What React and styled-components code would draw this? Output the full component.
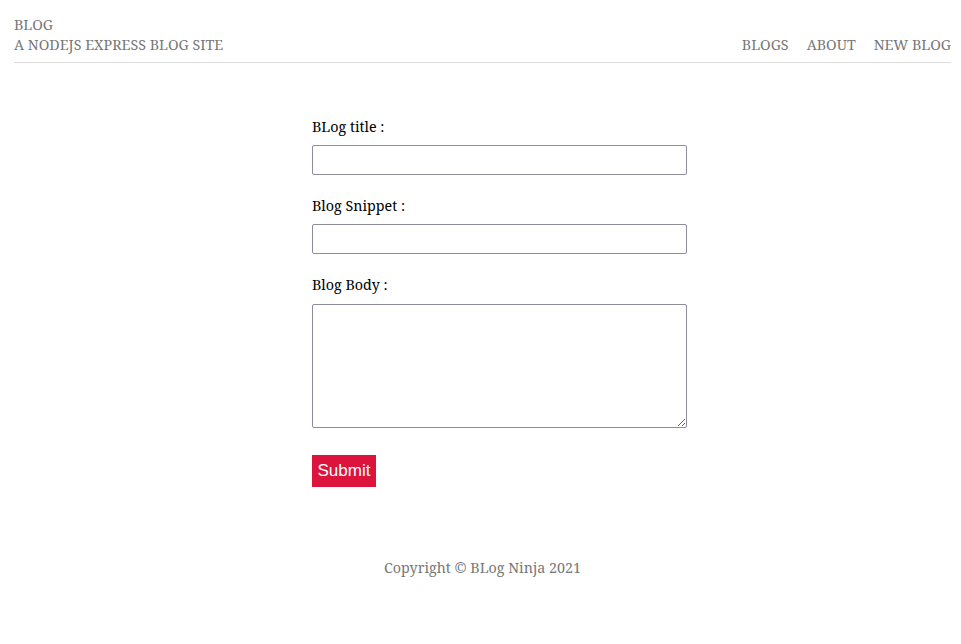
import React from "react";
import styled, { createGlobalStyle } from "styled-components";

const GlobalStyle = createGlobalStyle`
    body {
        margin: 0;
        background: #fff;
        font-family: "Noto Serif", "DejaVu Serif", "Liberation Serif", serif;
    }
`;

function App() {
    const links = ["BLOGS", "ABOUT", "NEW BLOG"];
    return (
        <>
            <GlobalStyle />
            <Page>
                <Header>
                    <Brand>
                        <div>BLOG</div>
                        <div>A NODEJS EXPRESS BLOG SITE</div>
                    </Brand>
                    <Nav>
                        {links.map((l) => (
                            <NavLink key={l} href="#">
                                {l}
                            </NavLink>
                        ))}
                    </Nav>
                </Header>
                <FormWrap>
                    <Form onSubmit={(e) => e.preventDefault()}>
                        <Label htmlFor="title">BLog title :</Label>
                        <Input id="title" type="text" />
                        <Label htmlFor="snippet">Blog Snippet :</Label>
                        <Input id="snippet" type="text" />
                        <Label htmlFor="body">Blog Body :</Label>
                        <TextArea id="body" />
                        <Button type="submit">Submit</Button>
                    </Form>
                </FormWrap>
                <Footer>Copyright © BLog Ninja 2021</Footer>
            </Page>
        </>
    );
}

export default App;

const Page = styled.div`
    padding: 0 10px 0 14px;
`;
const Header = styled.header`
    display: flex;
    justify-content: space-between;
    align-items: flex-end;
    padding: 15px 0 7px;
    border-bottom: 1px solid #ddd;
    color: #777;
    font-size: 14.3px;
    line-height: 20px;
`;
const Brand = styled.div``;
const Nav = styled.nav`
    display: flex;
    gap: 18px;
`;
const NavLink = styled.a`
    color: #777;
    text-decoration: none;
`;
const FormWrap = styled.div`
    display: flex;
    justify-content: center;
    padding: 54px 0 0 34px;
`;
const Form = styled.form`
    width: 375px;
    display: flex;
    flex-direction: column;
    align-items: flex-start;
`;
const Label = styled.label`
    font-size: 14.3px;
    line-height: 20px;
    color: #000;
    margin-bottom: 8px;
`;
const Input = styled.input`
    box-sizing: border-box;
    width: 100%;
    height: 30px;
    border: 1px solid #8f8c9c;
    border-radius: 2px;
    margin: 0 0 21px;
    padding: 4px 6px;
    font-family: inherit;
`;
const TextArea = styled.textarea`
    box-sizing: border-box;
    width: 100%;
    height: 124px;
    border: 1px solid #8f8c9c;
    border-radius: 2px;
    margin: 1px 0 27px;
    padding: 4px 6px;
    font-family: inherit;
`;
const Button = styled.button`
    background: #dc143c;
    color: #fff;
    border: none;
    width: 64px;
    height: 32px;
    padding: 0;
    font-family: "Liberation Sans", Arial, sans-serif;
    font-size: 17px;
    cursor: pointer;
`;
const Footer = styled.footer`
    text-align: center;
    color: #777;
    font-size: 14.3px;
    line-height: 20px;
    margin-top: 71px;
`;
